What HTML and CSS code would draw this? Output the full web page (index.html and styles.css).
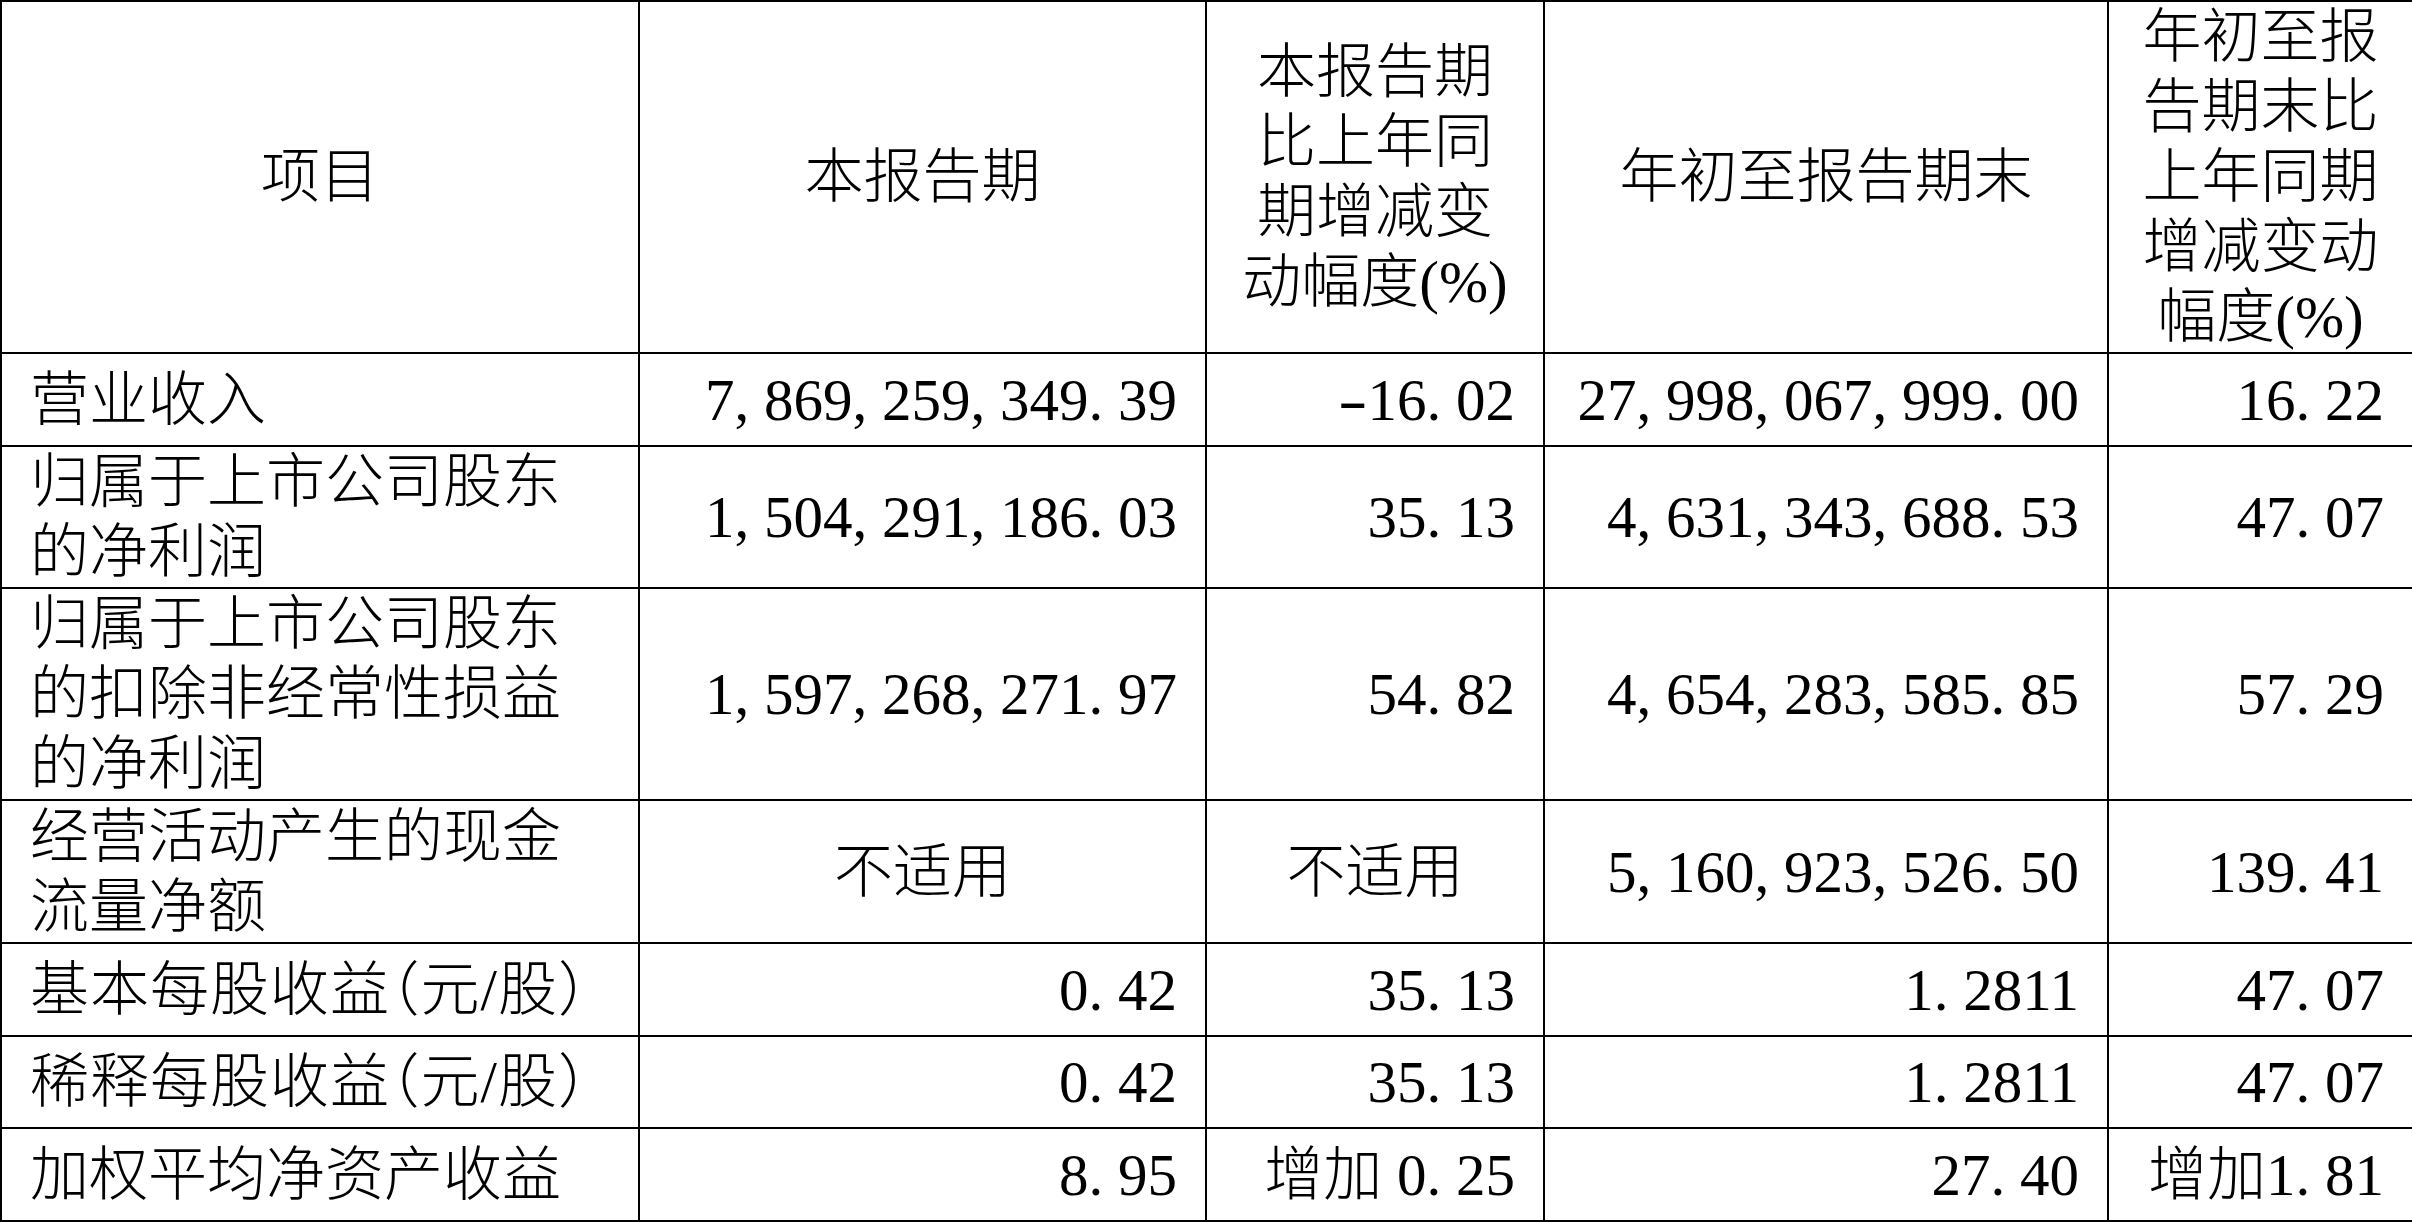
FILE: index.html
```html
<!DOCTYPE html>
<html lang="zh-CN">
<head>
<meta charset="utf-8">
<title>主要会计数据和财务指标</title>
<link rel="stylesheet" href="styles.css">
</head>
<body>
<table class="report">
  <colgroup>
    <col class="c-item">
    <col class="c-cur">
    <col class="c-cur-chg">
    <col class="c-ytd">
    <col class="c-ytd-chg">
  </colgroup>
  <thead>
    <tr class="r-head">
      <th>项目</th>
      <th>本报告期</th>
      <th>本报告期<br>比上年同<br>期增减变<br>动幅度(%)</th>
      <th>年初至报告期末</th>
      <th>年初至报<br>告期末比<br>上年同期<br>增减变动<br>幅度(%)</th>
    </tr>
  </thead>
  <tbody>
    <tr class="r-1b">
      <td class="label">营业收入</td>
      <td class="num">7<i>,</i>869<i>,</i>259<i>,</i>349<i>.</i>39</td>
      <td class="num"><i class="neg">-</i>16<i>.</i>02</td>
      <td class="num">27<i>,</i>998<i>,</i>067<i>,</i>999<i>.</i>00</td>
      <td class="num">16<i>.</i>22</td>
    </tr>
    <tr class="r-2">
      <td class="label">归属于上市公司股东的净利润</td>
      <td class="num">1<i>,</i>504<i>,</i>291<i>,</i>186<i>.</i>03</td>
      <td class="num">35<i>.</i>13</td>
      <td class="num">4<i>,</i>631<i>,</i>343<i>,</i>688<i>.</i>53</td>
      <td class="num">47<i>.</i>07</td>
    </tr>
    <tr class="r-3">
      <td class="label">归属于上市公司股东的扣除非经常性损益的净利润</td>
      <td class="num">1<i>,</i>597<i>,</i>268<i>,</i>271<i>.</i>97</td>
      <td class="num">54<i>.</i>82</td>
      <td class="num">4<i>,</i>654<i>,</i>283<i>,</i>585<i>.</i>85</td>
      <td class="num">57<i>.</i>29</td>
    </tr>
    <tr class="r-2b">
      <td class="label">经营活动产生的现金流量净额</td>
      <td class="na">不适用</td>
      <td class="na">不适用</td>
      <td class="num">5<i>,</i>160<i>,</i>923<i>,</i>526<i>.</i>50</td>
      <td class="num">139<i>.</i>41</td>
    </tr>
    <tr class="r-1b">
      <td class="label eps">基本每股收益（元/股）</td>
      <td class="num">0<i>.</i>42</td>
      <td class="num">35<i>.</i>13</td>
      <td class="num">1<i>.</i>2811</td>
      <td class="num">47<i>.</i>07</td>
    </tr>
    <tr class="r-1">
      <td class="label eps">稀释每股收益（元/股）</td>
      <td class="num">0<i>.</i>42</td>
      <td class="num">35<i>.</i>13</td>
      <td class="num">1<i>.</i>2811</td>
      <td class="num">47<i>.</i>07</td>
    </tr>
    <tr class="r-1b">
      <td class="label">加权平均净资产收益</td>
      <td class="num">8<i>.</i>95</td>
      <td class="num">增加 0<i>.</i>25</td>
      <td class="num">27<i>.</i>40</td>
      <td class="num">增加1<i>.</i>81</td>
    </tr>
  </tbody>
</table>
</body>
</html>
```

FILE: styles.css
```css
html, body {
  margin: 0;
  padding: 0;
  background: #fff;
}

body {
  font-family: "Liberation Serif", "Noto Sans CJK SC", serif;
  font-size: 59px;
  line-height: 70px;
  font-weight: 300;
  color: #000;
}

.report {
  border-collapse: collapse;
  table-layout: fixed;
  width: 2412px;
}

.c-item { width: 638px; }
.c-cur { width: 567px; }
.c-cur-chg { width: 338px; }
.c-ytd { width: 564px; }
.c-ytd-chg { width: 305px; }

.report th,
.report td {
  border: 2px solid #000;
  padding: 0 28px;
  vertical-align: middle;
  font-weight: 300;
  overflow: hidden;
}

.report th {
  text-align: center;
}

.r-head { height: 351px; }
.r-1 { height: 92px; }
.r-1b { height: 93px; }
.r-2 { height: 142px; }
.r-2b { height: 143px; }
.r-3 { height: 212px; }

.label {
  text-align: left;
}

.eps {
  white-space: nowrap;
  font-feature-settings: "halt";
  letter-spacing: 1px;
}

.num {
  text-align: right;
  white-space: nowrap;
}

.na {
  text-align: center;
}

.num i {
  font-style: normal;
  display: inline-block;
  width: 0.5em;
  text-align: left;
}

.num i.neg {
  text-align: right;
  transform: scaleX(1.5);
  transform-origin: right center;
}
```
